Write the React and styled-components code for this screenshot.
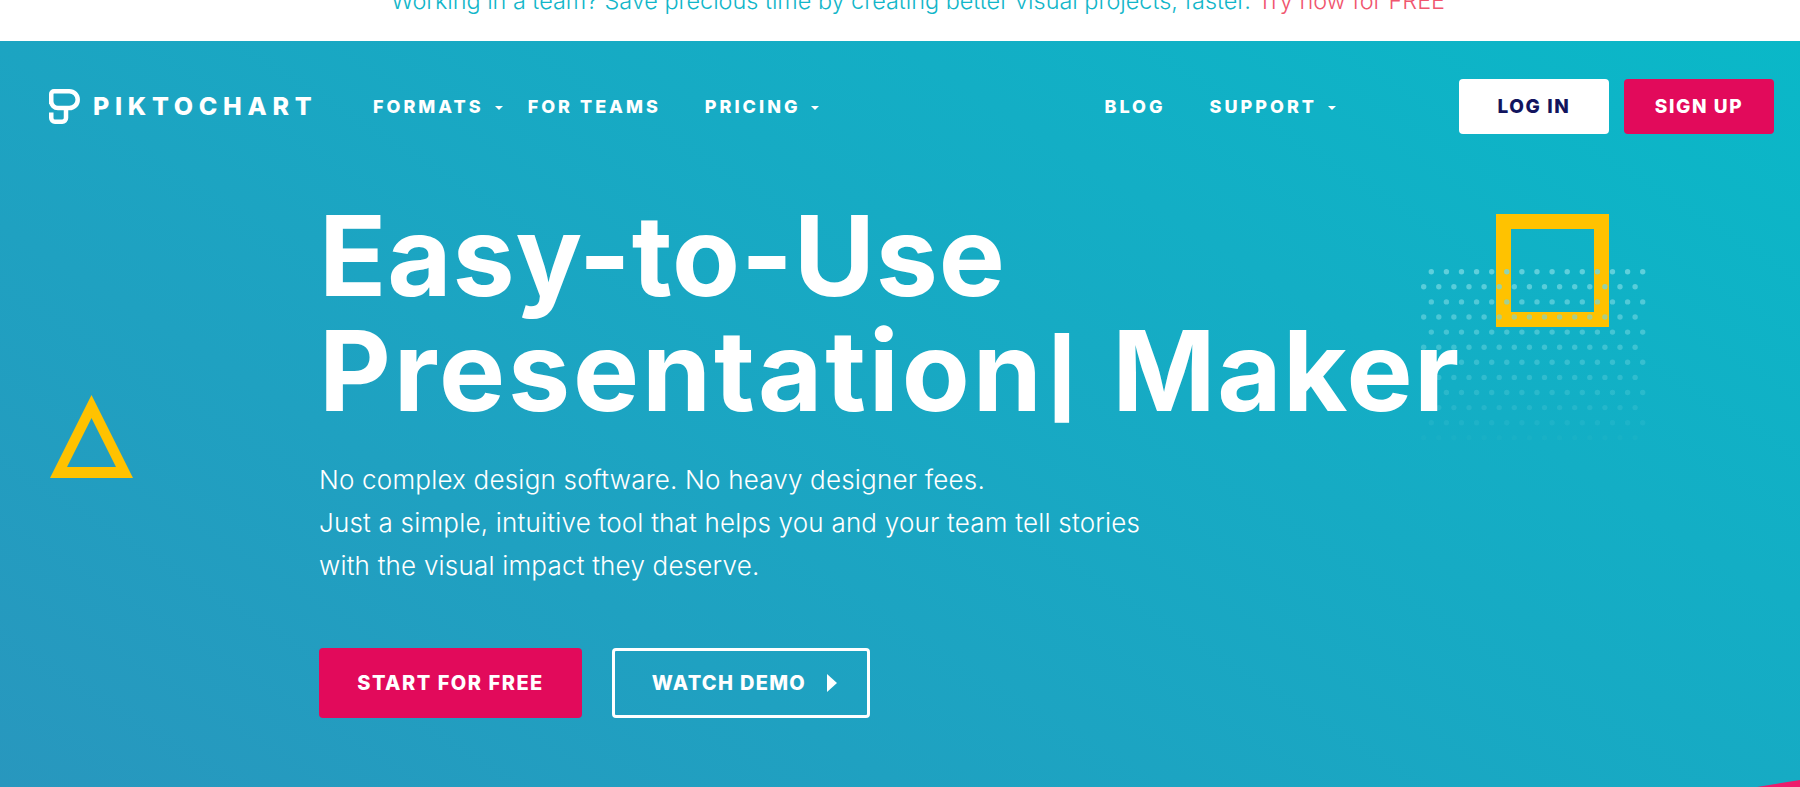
import React from "react";
import styled, { createGlobalStyle } from "styled-components";

const Global = createGlobalStyle`
  html, body { margin: 0; padding: 0; height: 100%; overflow: hidden; background: #fff; }
  * { box-sizing: border-box; }
  body { font-family: Inter, "Liberation Sans", sans-serif; }
`;
const Page = styled.div`height: 787px; display: flex; flex-direction: column;`;
const Banner = styled.div`
  height: 41px; flex: none; overflow: hidden; display: flex; align-items: flex-end; justify-content: center;
  padding: 0 0 27px 36px; font-size: 23.4px; font-weight: 300; line-height: 26px; color: #12b6c9; white-space: nowrap;
`;
const Promo = styled.span`color: #f0566f;`;
const Hero = styled.section`
  position: relative; flex: 1; overflow: hidden; color: #fff;
  background: linear-gradient(32deg, #2897be 0%, #0ab8c8 100%);
`;
const Nav = styled.nav`
  position: relative; z-index: 2; display: flex; align-items: center; height: 55px; margin-top: 38px; padding: 0 26px 0 49px;
`;
const Brand = styled.div`display: flex; align-items: center; gap: 13px; width: 324px; flex: none;`;
const Wordmark = styled.span`font-size: 25px; font-weight: 800; letter-spacing: 5.7px; line-height: 1;`;
const NavLink = styled.a`
  display: inline-flex; align-items: center; font-size: 18px; font-weight: 800; letter-spacing: 3px; white-space: nowrap;
  margin-left: ${p => p.$ml || 0}px;
`;
const Caret = styled.i`
  display: inline-block; width: 0; height: 0; margin-left: 11px; margin-top: 2px;
  border-left: 4.5px solid transparent; border-right: 4.5px solid transparent; border-top: 4.5px solid #fff;
`;
const Spacer = styled.div`flex: 1;`;
const TopButton = styled.a`
  display: flex; align-items: center; justify-content: center; width: 150px; height: 55px; border-radius: 4px;
  font-size: 19px; font-weight: 800; letter-spacing: 1.6px; margin-left: ${p => p.$ml || 0}px;
  background: ${p => p.$bg}; color: ${p => p.$fg};
`;
const Content = styled.div`position: relative; z-index: 1; padding: 64px 0 0 319px;`;
const Title = styled.h1`
  margin: 0; font-size: 111px; font-weight: 700; line-height: 115px; white-space: nowrap;
`;
const TitleLine = styled.span`display: block; letter-spacing: ${p => p.$ls}px;`;
const Cursor = styled.span`
  font-size: 75px; font-weight: 900; letter-spacing: 0; vertical-align: 6px; margin: 0 6px 0 2px;
`;
const Maker = styled.span`letter-spacing: 1.5px;`;
const Lead = styled.p`
  margin: 22.5px 0 0; font-size: 26px; font-weight: 300; line-height: 43px; letter-spacing: 0.2px; white-space: nowrap;
`;
const Actions = styled.div`display: flex; gap: 30px; margin-top: 61px;`;
const CtaButton = styled.a`
  display: flex; align-items: center; justify-content: center; height: 70px; border-radius: 4px;
  font-size: 20px; font-weight: 800; letter-spacing: 1.5px; color: #fff;
`;
const Primary = styled(CtaButton)`width: 263px; background: #e20a5b;`;
const Ghost = styled(CtaButton)`width: 258px; border: 3px solid #fff; gap: 21px; padding-left: 8px; letter-spacing: 1.3px;`;
const Deco = styled.svg`position: absolute; display: block; overflow: visible;`;
const Triangle = styled(Deco)`left: 50px; top: 354px;`;
const Square = styled.div`
  position: absolute; left: 1496px; top: 173px; width: 113px; height: 113px; border: 15px solid #ffc200;
`;
const Dots = styled(Deco)`left: 1420px; top: 228px;`;
const Corner = styled(Deco)`right: 0; bottom: 0;`;

const dots = [];
for (let r = 0; r < 12; r++) {
  const odd = r % 2 === 1;
  for (let c = 0; c < 15; c++) {
    dots.push({ x: (odd ? 3.7 : 11.3) + c * 15.1, y: 2.7 + r * 15.1, o: Math.max(0.04, 0.8 - r * 0.068) });
  }
}

const Logo = () => (
  <svg width="31" height="35" viewBox="0 0 31 35" fill="none" stroke="#fff" strokeWidth="4.5" strokeLinejoin="round">
    <path d="M2.25 15V5a2.75 2.75 0 0 1 2.75-2.75H20.3a8.4 8.4 0 0 1 0 16.8H9a6.75 6.75 0 0 1-6.75-6.75" />
    <path d="M17 19V29a3.75 3.75 0 0 1-3.75 3.75H6A3.75 3.75 0 0 1 2.25 29V23.5" />
  </svg>
);

export default function App() {
  return (
    <Page>
      <Global />
      <Banner>
        <span>Working in a team? Save precious time by creating better visual projects, faster. <Promo>Try now for FREE</Promo></span>
      </Banner>
      <Hero>
        <Square />
        <Dots width="230" height="190">
          {dots.map((d, i) => <circle key={i} cx={d.x} cy={d.y} r="2.7" fill="#73d7e1" fillOpacity={d.o} />)}
        </Dots>
        <Triangle width="83" height="84" viewBox="0 0 83 84">
          <path fillRule="evenodd" fill="#ffc200" d="M41.5 0L83 83H0ZM41.5 23L17 72H66Z" />
        </Triangle>
        <Corner width="43" height="7" viewBox="0 0 43 7">
          <path fill="#ee1c6b" d="M0 7L43 0V7Z" />
        </Corner>
        <Nav>
          <Brand><Logo /><Wordmark>PIKTOCHART</Wordmark></Brand>
          <NavLink>FORMATS<Caret /></NavLink>
          <NavLink $ml={25}>FOR TEAMS</NavLink>
          <NavLink $ml={44}>PRICING<Caret /></NavLink>
          <Spacer />
          <NavLink>BLOG</NavLink>
          <NavLink $ml={44}>SUPPORT<Caret /></NavLink>
          <TopButton $ml={123} $bg="#fff" $fg="#12145e">LOG IN</TopButton>
          <TopButton $ml={15} $bg="#e20a5b" $fg="#fff">SIGN UP</TopButton>
        </Nav>
        <Content>
          <Title>
            <TitleLine $ls={0.85}>Easy-to-Use</TitleLine>
            <TitleLine $ls={2.85}>Presentation<Cursor>|</Cursor> <Maker>Maker</Maker></TitleLine>
          </Title>
          <Lead>
            No complex design software. No heavy designer fees.<br />
            Just a simple, intuitive tool that helps you and your team tell stories<br />
            with the visual impact they deserve.
          </Lead>
          <Actions>
            <Primary>START FOR FREE</Primary>
            <Ghost>WATCH DEMO
              <svg width="11" height="18" viewBox="0 0 11 18"><path fill="#fff" d="M0 0L10 9L0 18Z" /></svg>
            </Ghost>
          </Actions>
        </Content>
      </Hero>
    </Page>
  );
}
